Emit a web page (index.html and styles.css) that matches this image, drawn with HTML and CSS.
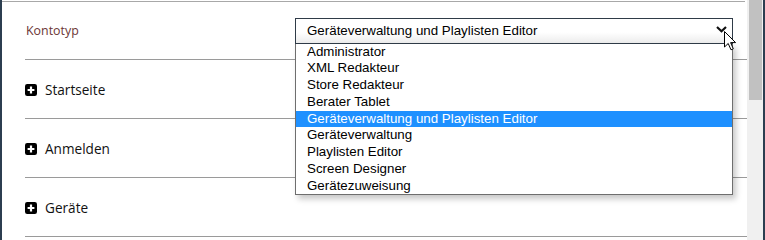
FILE: index.html
```html
<!DOCTYPE html>
<html lang="de">
<head>
<meta charset="utf-8">
<title>Kontotyp</title>
<link rel="stylesheet" href="styles.css">
</head>
<body>
<div class="frame">
  <div class="main">
    <div class="panel">
      <div class="row row-first">
        <div class="label">Kontotyp</div>
        <div class="select-wrap">
          <div class="select">
            <span class="select-text">Geräteverwaltung und Playlisten Editor</span>
            <svg class="chevron" width="11" height="7" viewBox="0 0 11 7"><path d="M1 1 L5.5 5.2 L10 1" fill="none" stroke="#111" stroke-width="2.2"/></svg>
          </div>
          <ul class="dropdown">
            <li>Administrator</li>
            <li>XML Redakteur</li>
            <li>Store Redakteur</li>
            <li>Berater Tablet</li>
            <li class="selected">Geräteverwaltung und Playlisten Editor</li>
            <li>Geräteverwaltung</li>
            <li>Playlisten Editor</li>
            <li>Screen Designer</li>
            <li>Gerätezuweisung</li>
          </ul>
          <svg class="cursor" width="13" height="20" viewBox="0 0 13 20"><path d="M0.5 0.5 L0.5 16 L4.2 12.5 L7 18.8 L9.3 17.8 L6.6 11.6 L11.6 11.6 Z" fill="#fff" stroke="#000" stroke-width="1" stroke-linejoin="miter"/></svg>
        </div>
      </div>
      <div class="row">
        <svg class="plus" width="12" height="12" viewBox="0 0 12 12"><rect x="0" y="0" width="12" height="12" rx="2.2" fill="#000"/><path d="M6 2.6 V9.4 M2.6 6 H9.4" stroke="#fff" stroke-width="2.2"/></svg>
        <span class="section">Startseite</span>
      </div>
      <div class="row">
        <svg class="plus" width="12" height="12" viewBox="0 0 12 12"><rect x="0" y="0" width="12" height="12" rx="2.2" fill="#000"/><path d="M6 2.6 V9.4 M2.6 6 H9.4" stroke="#fff" stroke-width="2.2"/></svg>
        <span class="section">Anmelden</span>
      </div>
      <div class="row">
        <svg class="plus" width="12" height="12" viewBox="0 0 12 12"><rect x="0" y="0" width="12" height="12" rx="2.2" fill="#000"/><path d="M6 2.6 V9.4 M2.6 6 H9.4" stroke="#fff" stroke-width="2.2"/></svg>
        <span class="section">Geräte</span>
      </div>
    </div>
  </div>
  <div class="scrollbar"><div class="thumb"></div></div>
  <div class="edge"></div>
</div>
</body>
</html>
```
FILE: styles.css
```css
* { box-sizing: border-box; }
html, body { margin: 0; padding: 0; background: #fff; }
body { width: 765px; height: 240px; overflow: hidden; font-family: "Open Sans", "Liberation Sans", sans-serif; }

.frame { display: flex; height: 240px; }
.main {
  flex: 1;
  border-left: 2px solid #2c3e50;
  padding-top: 1px;
  background: #fff;
}
.panel { border-top: 1px solid #a8a8a8; padding-left: 23px; margin-right: 2px; }
.row {
  height: 59px;
  border-bottom: 1px solid #9a9a9a;
  display: flex;
  align-items: center;
  margin-right: -2px;
}
.row-first { height: 58px; }

.label {
  width: 270px;
  font-size: 12.4px;
  color: #6b3535;
  padding-left: 1px;
}

.select-wrap { position: relative; width: 438px; margin-top: 0; }
.select {
  height: 26px;
  border: 1px solid #2f3b48;
  background: linear-gradient(#ffffff 55%, #ececec);
  display: flex;
  align-items: center;
  padding: 0 5px 0 11px;
  font-family: "Liberation Sans", Arial, sans-serif;
  font-size: 13.33px;
  color: #000;
}
.select-text { flex: 1; }
.chevron { margin-top: -2px; }

.dropdown {
  position: absolute;
  top: 100%;
  left: 0;
  width: 438px;
  margin: 0;
  padding: 0;
  list-style: none;
  background: #fff;
  border: 1px solid #6e6e6e;
  border-top: none;
  box-shadow: 3px 4px 6px rgba(0, 0, 0, 0.22);
  font-family: "Liberation Sans", Arial, sans-serif;
  font-size: 13.33px;
  color: #000;
  z-index: 5;
}
.dropdown li {
  height: 16.75px;
  line-height: 16.75px;
  padding-left: 11px;
  white-space: nowrap;
}
.dropdown li.selected { background: #1e90ff; color: #fff; }

.cursor { position: absolute; left: 429px; top: 13px; z-index: 10; }

.plus { flex: none; margin-right: 8px; margin-top: 1px; }
.section { font-size: 13.6px; color: #111; }

.scrollbar { width: 16px; background: #f0f0f0; padding: 0 1px 0 2px; }
.thumb { height: 100px; background: #c1c1c1; }
.edge { width: 2px; background: #2c3e50; }
```
